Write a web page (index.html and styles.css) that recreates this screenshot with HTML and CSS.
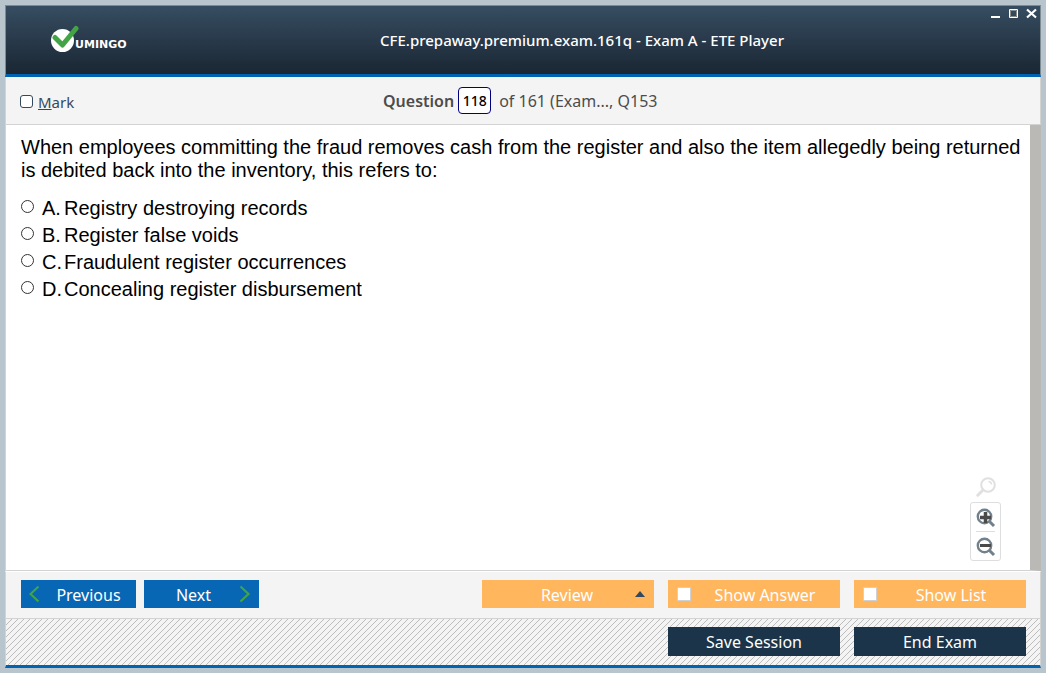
FILE: index.html
```html
<!DOCTYPE html>
<html lang="en">
<head>
<meta charset="utf-8">
<title>ETE Player</title>
<link rel="stylesheet" href="styles.css">
</head>
<body>
<div class="window">
  <header class="titlebar">
    <div class="brand">
      <svg class="brand-mark" width="29" height="28" viewBox="0 0 29 28" aria-hidden="true">
        <circle cx="12.500" cy="15.500" r="11.500" fill="#fff"/>
        <path d="M5 12.500 12.500 20 26 3.500" fill="none" stroke="#43a445" stroke-width="5" stroke-linecap="round" stroke-linejoin="round"/>
      </svg>
      <span class="brand-name">UMINGO</span>
    </div>
    <h1 class="title">CFE.prepaway.premium.exam.161q - Exam A - ETE Player</h1>
    <div class="window-controls">
      <button type="button" aria-label="Minimize"><svg width="11" height="11" viewBox="0 0 11 11"><path d="M1 8h9v2H1z" fill="#fff"/></svg></button>
      <button type="button" aria-label="Maximize"><svg width="11" height="11" viewBox="0 0 11 11"><path d="M1.500 1.500h8v8h-8z" fill="none" stroke="#fff"/><path d="M2.500 2.500h6v6h-6z" fill="none" stroke="#8b8b8b"/></svg></button>
      <button type="button" aria-label="Close"><svg width="11" height="11" viewBox="0 0 11 11"><path d="M1 1.500 10 9.500M10 1.500 1 9.500" stroke="#fff" stroke-width="2.200"/></svg></button>
    </div>
  </header>

  <div class="infobar">
    <label class="mark"><input type="checkbox"><span><u>M</u>ark</span></label>
    <div class="position">
      <label class="position-label" for="number">Question</label>
      <input class="number" id="number" type="text" value="118">
      <span>of 161 (Exam..., Q153</span>
    </div>
  </div>

  <main class="content">
    <div class="question">
      <p class="prompt">When employees committing the fraud removes cash from the register and also the item allegedly being returned is debited back into the inventory, this refers to:</p>
      <div class="options">
        <label class="option"><input type="radio" name="answer"><span class="letter">A.</span><span>Registry destroying records</span></label>
        <label class="option"><input type="radio" name="answer"><span class="letter">B.</span><span>Register false voids</span></label>
        <label class="option"><input type="radio" name="answer"><span class="letter">C.</span><span>Fraudulent register occurrences</span></label>
        <label class="option"><input type="radio" name="answer"><span class="letter">D.</span><span>Concealing register disbursement</span></label>
      </div>
    </div>
    <div class="zoom">
      <svg width="20" height="20" viewBox="0 0 20 20" aria-hidden="true"><circle cx="12" cy="8" r="6.800" fill="none" stroke="#e0e0e0" stroke-width="2"/><path d="M12.500 4.500a3 3 0 0 1 3 3" fill="none" stroke="#e0e0e0" stroke-width="1.500"/><path d="M7 13 1.800 18.200" stroke="#e0e0e0" stroke-width="3" stroke-linecap="round"/></svg>
      <div class="zoom-box">
        <button type="button" aria-label="Zoom in"><svg width="20" height="20" viewBox="0 0 20 20"><circle cx="8.500" cy="8.500" r="6.700" fill="none" stroke="#72808b" stroke-width="2.400"/><path d="M13.500 13.500 18 18" stroke="#72808b" stroke-width="3"/><path d="M4 9.500h11M9.500 4v11" stroke="#4a4a4a" stroke-width="3.500"/></svg></button>
        <button type="button" aria-label="Zoom out"><svg width="20" height="20" viewBox="0 0 20 20"><circle cx="8.500" cy="8.500" r="6.700" fill="none" stroke="#72808b" stroke-width="2.400"/><path d="M13.500 13.500 18 18" stroke="#72808b" stroke-width="3"/><path d="M4 8.500h11" stroke="#4a4a4a" stroke-width="3"/></svg></button>
      </div>
    </div>
  </main>

  <div class="actions">
    <button class="btn nav" type="button"><svg width="12" height="18" viewBox="0 0 12 18" aria-hidden="true"><path d="M9.500 1.500 1.500 9l8 7.500" fill="none" stroke="#43a445" stroke-width="2.200"/></svg><span>Previous</span></button>
    <button class="btn nav next" type="button"><span>Next</span><svg width="12" height="18" viewBox="0 0 12 18" aria-hidden="true"><path d="M1.500 1.500 9.500 9l-8 7.500" fill="none" stroke="#43a445" stroke-width="2.200"/></svg></button>
    <button class="btn tool review" type="button"><span>Review</span><svg width="10" height="6" viewBox="0 0 10 6" aria-hidden="true"><path d="M0 6 5 0l5 6z" fill="#34495e"/></svg></button>
    <label class="btn tool"><input type="checkbox"><span>Show Answer</span></label>
    <label class="btn tool"><input type="checkbox"><span>Show List</span></label>
  </div>

  <footer class="session">
    <button class="btn dark" type="button">Save Session</button>
    <button class="btn dark" type="button">End Exam</button>
  </footer>
</div>
</body>
</html>
```
FILE: styles.css
```css
* { box-sizing: border-box; }

body {
  margin: 0;
  background: #b9c5cc;
  font-family: "Noto Sans", "Open Sans", sans-serif;
  font-size: 16px;
  color: #4c4c4c;
}

button, input { font: inherit; margin: 0; }
button { border: 0; padding: 0; background: none; }

.window {
  display: flex;
  flex-direction: column;
  min-height: 100vh;
  padding: 5px;
}

.titlebar {
  display: grid;
  grid-template-columns: 374px 1fr auto;
  align-items: center;
  height: 72px;
  border: 1px solid #7d8c92;
  border-bottom: 3px solid #0063b1;
  background: linear-gradient(#364d61, #1a2633);
}

.brand { display: flex; align-items: flex-end; padding: 0 0 2px 44px; }
.brand-mark { display: block; }
.brand-name {
  margin: 0 0 1px -4px;
  font: bold 11px/14px "DejaVu Sans", sans-serif;
  color: #fff;
}

.title { margin: 0; font-size: 15px; font-weight: 500; line-height: 20px; color: #fff; }

.window-controls { display: flex; align-self: start; gap: 7px; padding: 2px 3px 0 0; }
.window-controls svg { display: block; }

.infobar {
  display: grid;
  grid-template-columns: 363px 1fr;
  align-items: center;
  height: 48px;
  padding-left: 14px;
  border: 1px solid #d3d3d3;
  border-top: 0;
  background: #f4f4f4;
}

.mark { display: flex; align-items: center; gap: 5px; padding-top: 2px; font-size: 15px; line-height: 22px; color: #34495e; }
.mark input {
  appearance: none;
  width: 13px;
  height: 13px;
  border: 1px solid #34495e;
  border-radius: 3px;
  background: #fff;
}

.position { display: flex; align-items: center; gap: 4px; }
.position span { padding-left: 4px; }
.position-label { font-weight: 600; }
.number {
  width: 33px;
  height: 27px;
  padding: 0;
  border: 1px solid #000080;
  border-radius: 4px;
  background: #fff;
  color: #000;
  font-size: 14px;
  font-weight: 500;
  text-align: center;
}

.content {
  display: flex;
  flex: 1;
  border-right: 11px solid #bbb9b5;
  border-bottom: 1px solid #d3d3d3;
  border-left: 1px solid #d3d3d3;
  background: #fff;
}

.question {
  flex: 1;
  padding: 11px 0 0 15px;
  margin-right: -60px;
  color: #000;
  font: 20px/23px "Liberation Sans", Arial, sans-serif;
}
.prompt { margin: 0; }
.options { padding-top: 13px; }
.option { display: flex; line-height: 27px; }
.option input {
  appearance: none;
  width: 13px;
  height: 13px;
  margin: 5px 8px 0 0;
  border: 1px solid #333;
  border-radius: 50%;
  background: #fff;
}
.letter { width: 22px; }

.zoom {
  display: flex;
  flex-direction: column;
  align-items: center;
  align-self: flex-end;
  gap: 5px;
  padding: 0 29px 9px 0;
}
.zoom-box {
  display: grid;
  padding: 0 5px;
  border: 1px solid #dedede;
  border-radius: 3px;
  background: #fff;
}
.zoom-box button { height: 28px; width: 19px; padding-top: 1px; }
.zoom-box button + button { border-top: 1px solid #dedede; height: 29px; }
.zoom-box svg { display: block; margin: auto; }

.actions {
  display: flex;
  gap: 14px;
  padding: 8px 14px 10px 15px;
  border: 1px solid #d3d3d3;
  border-top-color: #fff;
  background: #f4f4f4;
}

.btn {
  display: flex;
  align-items: center;
  justify-content: center;
  height: 28px;
  color: #fff;
  line-height: 22px;
}
.actions span { padding-top: 2px; }
.nav { width: 115px; padding: 0 8px; background: #0767b5; }
.nav span { flex: 1; padding-left: 8px; }
.next { margin: 0 auto 0 -6px; }
.next span { padding: 2px 8px 0 4px; }

.tool { width: 172px; padding: 0 9px; background: #ffb65c; }
.tool span { flex: 1; padding-left: 8px; text-align: center; }
.tool input {
  appearance: none;
  width: 14px;
  height: 14px;
  border: 1px solid #d0d0d0;
  background: #fff;
}

.session {
  display: flex;
  justify-content: flex-end;
  gap: 14px;
  padding: 8px 14px 9px;
  border: 1px solid #d3d3d3;
  border-top: 0;
  border-bottom: 3px solid #0063b1;
  background: #f4f4f4 linear-gradient(135deg, transparent 43%, #bcbcbc 43% 57%, transparent 57%) 0 0 / 6px 6px;
}
.dark { width: 172px; height: 29px; background: #1b3449; }
```
